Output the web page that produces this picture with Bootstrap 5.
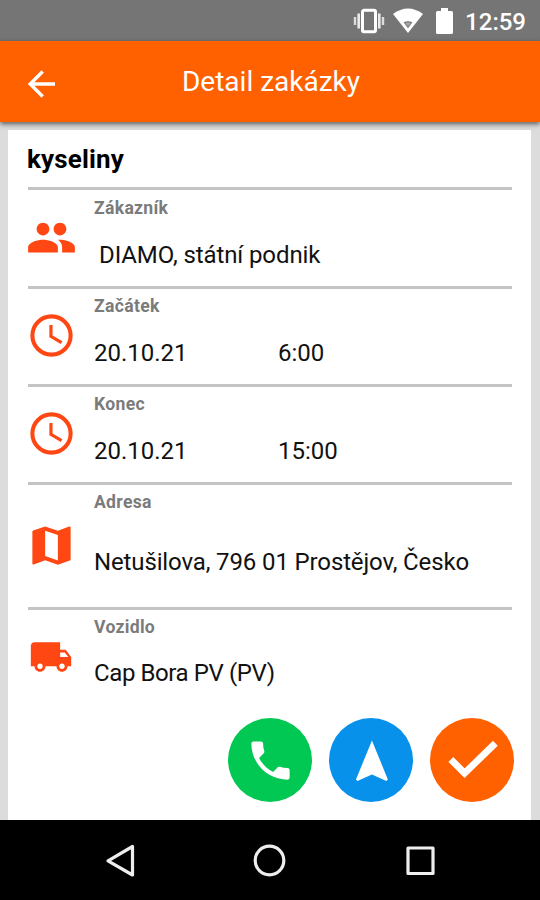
<!DOCTYPE html>
<html lang="cs">
<head>
<meta charset="utf-8">
<meta name="viewport" content="width=device-width, initial-scale=1">
<title>Detail zakázky</title>
<link href="https://cdn.jsdelivr.net/npm/bootstrap@5.3.0/dist/css/bootstrap.min.css" rel="stylesheet">
<style>
body{font-family:Roboto,"Noto Sans",sans-serif;background:#dcdcdc;color:#111;height:900px;overflow:hidden;line-height:1}
svg{display:block;flex:none}
.status-bar{height:41px;background:#757575;color:#fff;padding-right:14px}
.battery{margin-left:13px}
.clock-text{font-size:24px;font-weight:500;line-height:28px;margin-top:2px}
.app-bar{height:81px;background:#ff6000;color:#fff;box-shadow:0 2px 5px rgba(0,0,0,.6);z-index:1}
.app-title{font-size:28px;line-height:32px;padding-left:2px}
.back{width:54px;padding-left:25px}
.sheet{margin:8px 9px 0 8px;padding:0 19px 0 20px;background:#fff}
.order-name{font-size:26px;font-weight:700;height:57px;line-height:58px;margin-left:-1px;letter-spacing:.15px;color:#000}
.entry{border-top:3px solid #c4c4c4;height:98px}
.entry-first{height:99px}
.entry-tall{height:125px}
.entry-icon{width:46px;margin-right:20px;padding-bottom:2px;color:#ff4713}
.entry-label{font-size:17.6px;font-weight:700;line-height:20px;letter-spacing:.3px;color:#7b7b7b;padding-top:7px}
.entry-value{font-size:24px;line-height:28px}
.entry-value .day{width:184px}
.v-a{padding:23px 0 0 5px;letter-spacing:-.1px}
.v-b{padding-top:23px}
.v-d{padding-top:36px;letter-spacing:-.13px}
.v-e{padding-top:22px;letter-spacing:-.4px}
.fabs{gap:17px;margin:13px -2px 0 0}
.fab{width:84px;height:84px;color:#fff}
.fab-call{background:#00c853}
.fab-nav{background:#0791ea}
.fab-done{background:#ff6000}
.nav-keys{height:80px;background:#000}
</style>
<script src="https://cdn.jsdelivr.net/npm/bootstrap@5.3.0/dist/js/bootstrap.bundle.min.js"></script>
</head>
<body class="d-flex flex-column">
<div class="status-bar d-flex align-items-center justify-content-end flex-shrink-0">
  <svg width="32" height="26" viewBox="0 0 32 26" fill="none" stroke="#fff"><rect x="9.5" y="2.3" width="13" height="21.4" rx="1.5" stroke-width="3"/><path d="M5.7 5.5v15M26.3 5.5v15" stroke-width="2.6" opacity=".85"/><path d="M2 9v8M30 9v8" stroke-width="2.4" opacity=".75"/></svg>
  <svg class="ms-2" width="30" height="26" viewBox="0 0 30 26"><path d="M0 6Q15-5 30 6L15 25z" fill="#fff"/><path d="M10.7 14.5Q15 12 19.3 14.5L15 20.2z" fill="#757575"/><path d="M12.2 15Q15 13.8 17.8 15L15 18.5z" fill="#aaa"/></svg>
  <svg class="battery" width="17" height="26" viewBox="0 0 17 26" fill="#fff"><path d="M5 0h7v3h3.5q1.500 0 1.500 1.500V24.500q0 1.500-1.500 1.500h-14Q0 26 0 24.500V4.500Q0 3 1.500 3H5z"/></svg>
  <span class="clock-text ms-2 ps-1">12:59</span>
</div>
<header class="app-bar d-flex align-items-center flex-shrink-0">
  <div class="back"><svg class="mt-1" width="33" height="33" viewBox="0 0 33 33" fill="none" stroke="#fff" stroke-width="3.400"><path d="M30 17H5M17.700 4.500L5.200 17l12.500 12.500"/></svg></div>
  <div class="app-title flex-grow-1 text-center">Detail zakázky</div>
  <div class="back"></div>
</header>
<main class="sheet flex-grow-1 d-flex flex-column">
  <h1 class="order-name mb-0">kyseliny</h1>
  <section class="entry entry-first d-flex">
    <div class="entry-icon d-flex align-items-center justify-content-center"><svg width="51" height="51" viewBox="0 0 24 24" fill="currentColor"><path d="M16 11c1.660 0 2.990-1.340 2.990-3S17.660 5 16 5s-3 1.340-3 3 1.340 3 3 3zm-8 0c1.660 0 2.990-1.340 2.990-3S9.660 5 8 5 5 6.340 5 8s1.340 3 3 3zm0 2c-2.330 0-7 1.170-7 3.500V19h14v-2.500c0-2.330-4.670-3.500-7-3.500zm8 0c-.29 0-.62.020-.97.050 1.160.84 1.970 1.970 1.970 3.450V19h6v-2.500c0-2.330-4.670-3.500-7-3.500z"/></svg></div>
    <div class="flex-grow-1"><div class="entry-label pt-2">Zákazník</div><div class="entry-value v-a">DIAMO, státní podnik</div></div>
  </section>
  <section class="entry d-flex">
    <div class="entry-icon d-flex align-items-center justify-content-center"><svg width="51" height="51" viewBox="0 0 24 24" fill="none" stroke="currentColor"><circle cx="12" cy="12" r="9" stroke-width="1.900"/><path d="M11.750 7v5.400l5 2.900" stroke-width="1.500"/></svg></div>
    <div class="flex-grow-1"><div class="entry-label">Začátek</div><div class="entry-value v-b d-flex"><span class="day">20.10.21</span><span>6:00</span></div></div>
  </section>
  <section class="entry d-flex">
    <div class="entry-icon d-flex align-items-center justify-content-center"><svg width="51" height="51" viewBox="0 0 24 24" fill="none" stroke="currentColor"><circle cx="12" cy="12" r="9" stroke-width="1.900"/><path d="M11.750 7v5.400l5 2.900" stroke-width="1.500"/></svg></div>
    <div class="flex-grow-1"><div class="entry-label">Konec</div><div class="entry-value v-b d-flex"><span class="day">20.10.21</span><span>15:00</span></div></div>
  </section>
  <section class="entry entry-tall d-flex">
    <div class="entry-icon d-flex align-items-center justify-content-center"><svg width="51" height="51" viewBox="0 0 24 24" fill="currentColor"><path d="M20.500 3l-.16.030L15 5.100 9 3 3.360 4.900c-.21.070-.36.250-.36.480V20.500c0 .28.220.5.500.5l.16-.030L9 18.900l6 2.100 5.640-1.900c.21-.070.36-.25.360-.48V3.500c0-.28-.22-.5-.5-.5zM15 19l-6-2.110V5l6 2.110V19z"/></svg></div>
    <div class="flex-grow-1"><div class="entry-label">Adresa</div><div class="entry-value v-d text-nowrap">Netušilova, 796 01 Prostějov, Česko</div></div>
  </section>
  <section class="entry d-flex">
    <div class="entry-icon d-flex align-items-center justify-content-center"><svg width="44" height="44" viewBox="0 0 24 24" fill="currentColor"><path d="M20 8h-3V4H3c-1.100 0-2 .9-2 2v11h2c0 1.660 1.340 3 3 3s3-1.340 3-3h6c0 1.660 1.340 3 3 3s3-1.340 3-3h2v-5l-3-4zM6 18.500c-.83 0-1.500-.67-1.500-1.500s.67-1.500 1.500-1.500 1.500.67 1.500 1.500-.67 1.500-1.500 1.500zm13.500-9l1.960 2.500H17V9.500h2.500zm-1.500 9c-.83 0-1.500-.67-1.500-1.500s.67-1.500 1.500-1.500 1.500.67 1.500 1.500-.67 1.500-1.500 1.500z"/></svg></div>
    <div class="flex-grow-1"><div class="entry-label">Vozidlo</div><div class="entry-value v-e">Cap Bora PV (PV)</div></div>
  </section>
  <div class="fabs d-flex justify-content-end">
    <button class="fab fab-call btn rounded-circle border-0 p-0 d-flex align-items-center justify-content-center" aria-label="Zavolat"><svg width="51" height="51" viewBox="0 0 24 24" fill="currentColor"><path d="M6.620 10.790c1.440 2.830 3.760 5.140 6.590 6.590l2.200-2.200c.27-.27.67-.36 1.020-.24 1.120.37 2.330.57 3.570.57.550 0 1 .45 1 1V20c0 .55-.45 1-1 1-9.390 0-17-7.610-17-17 0-.55.450-1 1-1h3.500c.55 0 1 .45 1 1 0 1.250.2 2.450.57 3.570.11.35.030.74-.25 1.020l-2.200 2.200z"/></svg></button>
    <button class="fab fab-nav btn rounded-circle border-0 p-0 d-flex align-items-center justify-content-center" aria-label="Navigovat"><svg width="51" height="51" viewBox="0 0 24 24" fill="currentColor"><path d="M12.200 2.600L4.700 20.890l.71.710L12.200 18.600l6.790 3 .71-.71z"/></svg></button>
    <button class="fab fab-done btn rounded-circle border-0 p-0 d-flex align-items-center justify-content-center" aria-label="Dokončit"><svg width="66" height="66" viewBox="0 0 24 24" fill="none" stroke="currentColor" stroke-width="2.500"><path d="M4.300 11.800l5 5L20.500 5.900"/></svg></button>
  </div>
</main>
<nav class="nav-keys d-flex flex-shrink-0">
  <svg width="540" height="80" viewBox="0 0 540 80" fill="none" stroke="#eee" stroke-width="3.200" stroke-linejoin="round"><path d="M132.500 26.500v28.500L108 40.800z"/><circle cx="269.500" cy="40.500" r="14.300"/><rect x="408" y="28" width="25" height="25.500"/></svg>
</nav>
</body>
</html>
